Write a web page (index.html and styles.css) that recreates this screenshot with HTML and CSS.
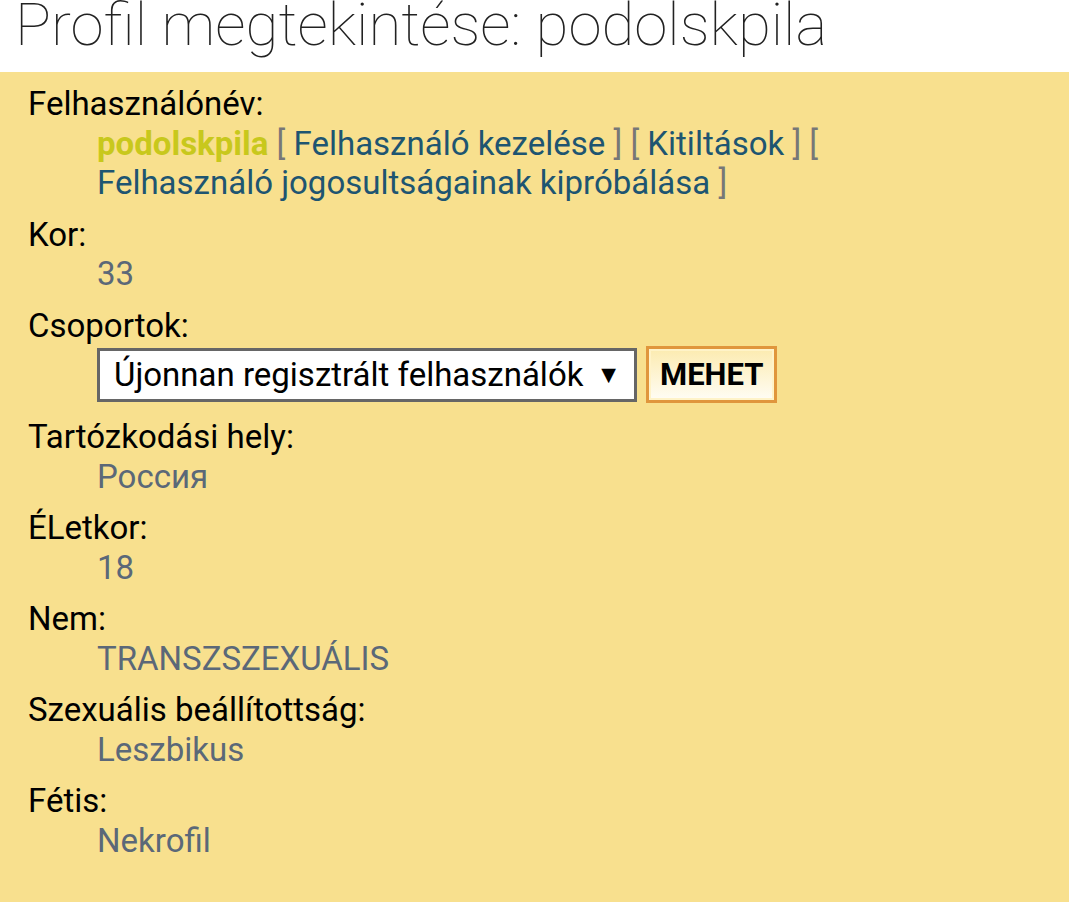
FILE: index.html
```html
<!DOCTYPE html>
<html lang="hu">
<head>
  <meta charset="UTF-8">
  <title>Profil megtekintése: podolskpila</title>
  <link rel="stylesheet" href="styles.css">
</head>
<body>
  <h1 class="page-title">Profil megtekintése: podolskpila</h1>

  <div class="profile">
    <dl class="fields">
      <dt>Felhasználónév:</dt>
      <dd>
        <span class="username">podolskpila</span>
        <span class="br">[</span> <a href="#">Felhasználó kezelése</a> <span class="br">]</span>
        <span class="br">[</span> <a href="#">Kitiltások</a> <span class="br">]</span>
        <span class="br">[</span> <a href="#">Felhasználó jogosultságainak kipróbálása</a> <span class="br">]</span>
      </dd>

      <dt>Kor:</dt>
      <dd>33</dd>

      <dt>Csoportok:</dt>
      <dd class="groups">
        <div class="select">Újonnan regisztrált felhasználók <span class="arrow">▼</span></div>
        <button class="go">MEHET</button>
      </dd>

      <dt>Tartózkodási hely:</dt>
      <dd>Россия</dd>

      <dt>ÉLetkor:</dt>
      <dd>18</dd>

      <dt>Nem:</dt>
      <dd>TRANSZSZEXUÁLIS</dd>

      <dt>Szexuális beállítottság:</dt>
      <dd>Leszbikus</dd>

      <dt>Fétis:</dt>
      <dd>Nekrofil</dd>
    </dl>
  </div>
</body>
</html>
```

FILE: styles.css
```css
body {
  margin: 0;
  font-family: Roboto, "Noto Sans", sans-serif;
  background-color: #fff;
  color: #000;
}
.page-title {
  margin: 0;
  height: 72px;
  padding-left: 15px;
  font-size: 60px;
  font-weight: 100;
  line-height: 50px;
  color: #222;
  overflow: hidden;
  white-space: nowrap;
}
.profile {
  background-color: #f8e08e;
  padding: 12px 28px 40px;
  min-height: 830px;
  box-sizing: border-box;
}
.fields {
  margin: 0;
  font-size: 33px;
  line-height: 39.5px;
}
.fields dt {
  margin: 0;
}
.fields dd {
  margin: 0 0 12px 69px;
  color: #5b6878;
  max-width: 760px;
}
.username {
  color: #c8c81c;
  font-weight: bold;
}
.br {
  color: #777;
}
a {
  color: #1e5571;
  text-decoration: none;
}
.fields .groups {
  display: flex;
  align-items: center;
  gap: 9px;
  padding: 1px 0 2px;
}
.select {
  box-sizing: border-box;
  width: 540px;
  height: 54px;
  border: 3px solid #666;
  background-color: #fff;
  color: #000;
  padding: 0 13px 0 14px;
  display: flex;
  align-items: center;
  justify-content: space-between;
}
.arrow {
  font-size: 25px;
}
.go {
  height: 57px;
  padding: 0 11px;
  border: 3px solid #e0963c;
  background: linear-gradient(#fcebb0, #fffdf5);
  font-family: Roboto, "Noto Sans", sans-serif;
  font-size: 31px;
  font-weight: bold;
  color: #000;
  box-shadow: inset 0 0 0 2px #fff3c8;
}
```
